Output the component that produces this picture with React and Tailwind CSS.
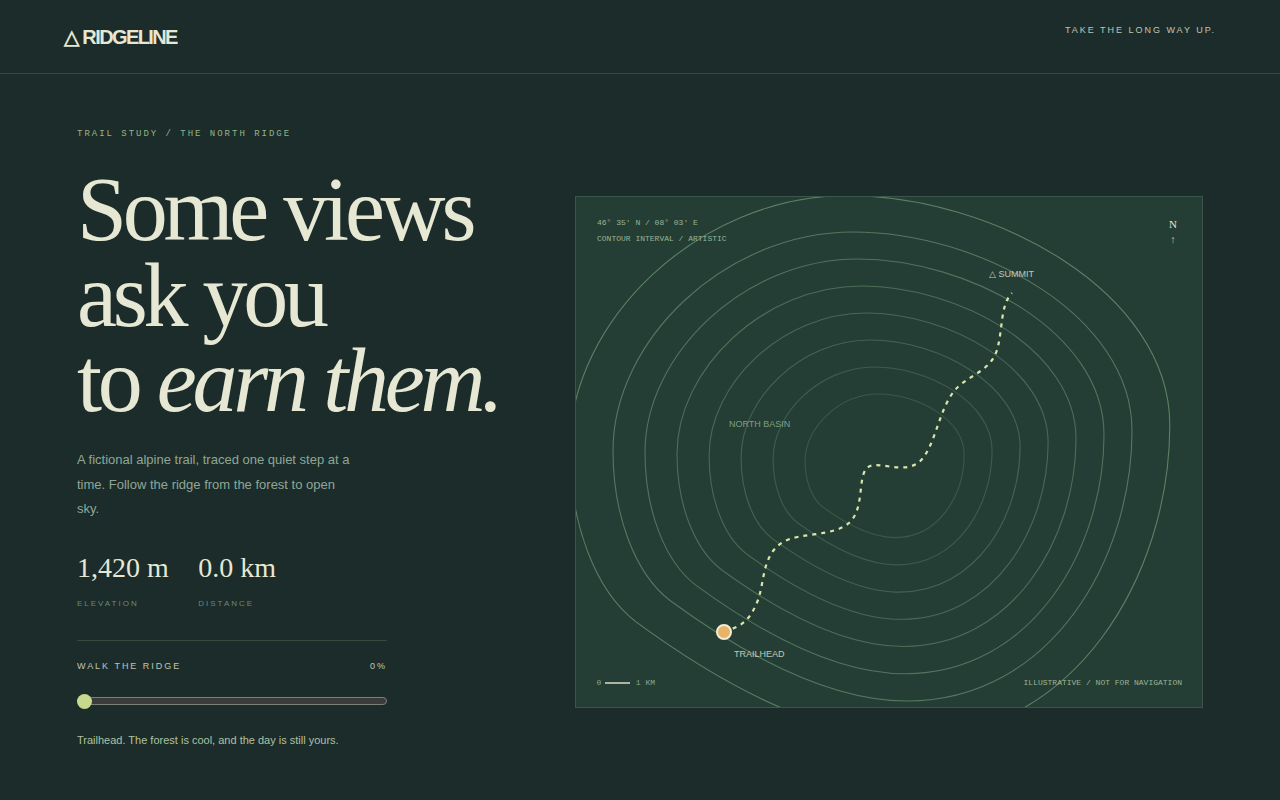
import React from 'react'

const SERIF = 'font-["Liberation_Serif",serif]'

// one contour ring as bezier segments, offsets from the basin centre
const RING = [
  [[90, -233.5], [242, -150], [242, -35]],
  [[242, 95], [160, 235.5], [17, 235.5]],
  [[-60, 235.5], [-145, 190], [-220, 135]],
  [[-255, 108], [-277, 50], [-277, -15]],
  [[-277, -125], [-165, -233.5], [-37, -233.5]],
]

const LEVELS = [
  { s: 2.65, opacity: 0.3 },
  { s: 3.65, opacity: 0.36 },
  { s: 4.65, opacity: 0.44 },
  { s: 5.65, opacity: 0.5 },
  { s: 6.65, opacity: 0.56 },
  { s: 7.65, opacity: 0.62 },
  { s: 8.65, opacity: 0.68 },
  { s: 10, opacity: 0.78 },
]

function ringPath(s) {
  const k = s / 8.65
  const pt = ([x, y]) => `${(890 + x * k).toFixed(1)} ${(465.5 + y * k).toFixed(1)}`
  return `M${pt([-37, -233.5])}` + RING.map(([a, b, c]) => `C${pt(a)} ${pt(b)} ${pt(c)}`).join('') + 'Z'
}

const ROUTE =
  'M724 631C745 627 752 615 758 600C765 580 762 555 783 542C800 532 835 537 850 522C864 508 858 480 866 469C875 458 900 475 918 463C935 450 938 410 955 390C968 375 990 372 997 350C1003 330 1000 305 1012 293'

function TrailMap() {
  return (
    <div className="relative w-[628px] h-[512px] mt-[122px] shrink-0 bg-[#253e35] border border-[#3b5548] overflow-hidden">
      <svg className="absolute inset-0 w-full h-full" viewBox="576 197 626 510" fill="none">
        {LEVELS.map((l) => (
          <path key={l.s} d={ringPath(l.s)} stroke="#6a9476" strokeOpacity={l.opacity} strokeWidth="1.1" />
        ))}
        <path d={ROUTE} stroke="#d8e6ac" strokeWidth="2.2" strokeDasharray="4 5" />
        <circle cx="724" cy="632" r="7" fill="#e8b368" stroke="#f1ecd4" strokeWidth="2" />
      </svg>

      <div className='absolute left-[21px] top-[18px] font-["Liberation_Mono",monospace] text-[8px] leading-[16px] text-[#b5d0b0] opacity-80'>
        <div>46° 35' N / 08° 03' E</div>
        <div>CONTOUR INTERVAL / ARTISTIC</div>
      </div>

      <div className={`absolute right-[25px] top-[20px] flex flex-col items-center text-[11px] leading-[14.5px] text-[#e4e7d2] ${SERIF}`}>
        <span>N</span>
        <span className="opacity-70">↑</span>
      </div>

      <span className='absolute left-[413px] top-[71px] font-["Liberation_Sans",sans-serif] text-[9px] leading-[12px] text-[#e6e8d4] opacity-80'>
        △ SUMMIT
      </span>
      <span className='absolute left-[153px] top-[221px] font-["Liberation_Sans",sans-serif] text-[9px] leading-[12px] text-[#a0c8a5] opacity-70'>
        NORTH BASIN
      </span>
      <span className='absolute left-[158px] top-[451px] font-["Liberation_Sans",sans-serif] text-[9px] leading-[12px] text-[#e6e8d4] opacity-80'>
        TRAILHEAD
      </span>

      <div className='absolute left-[20.5px] bottom-[19px] flex items-center gap-[4px] font-["Liberation_Mono",monospace] text-[8px] leading-[10px] text-[#b5d0b0] opacity-70'>
        <span>0</span>
        <span className="w-[25px] h-[1.5px] mr-[1.5px] bg-[#e6e8d4]" />
        <span>1 KM</span>
      </div>
      <span className='absolute right-[20px] bottom-[19px] font-["Liberation_Mono",monospace] text-[8px] leading-[10px] text-[#b5d0b0] opacity-80'>
        ILLUSTRATIVE / NOT FOR NAVIGATION
      </span>
    </div>
  )
}

function Stat({ value, label }) {
  return (
    <div>
      <div className={`text-[28px] leading-[32px] text-[#e6e8d4] ${SERIF}`}>{value}</div>
      <div className="mt-[15px] text-[8px] leading-[10px] tracking-[0.25em] text-[#8fb098] opacity-70">{label}</div>
    </div>
  )
}

export default function App() {
  return (
    <div className='min-h-[800px] bg-[#1b2c2b] font-["Liberation_Sans",sans-serif]'>
      <header className="h-[74px] px-16 flex justify-between border-b border-[#37493f]">
        <div className="pt-[26px] text-[20px] leading-[23px] font-bold tracking-[-0.08em] text-[#e6e8d4]">
          △ <span className="ml-[1px]">RIDGELINE</span>
        </div>
        <div className="pt-[24px] text-[9px] leading-[12px] tracking-[0.22em] text-[#e6e8d4] opacity-80">
          TAKE THE LONG WAY UP.
        </div>
      </header>

      <main className="flex justify-between px-[77px]">
        <section className="w-[310px] pt-[54px] shrink-0">
          <div className='font-["Liberation_Mono",monospace] text-[9px] leading-[12px] tracking-[0.22em] text-[#b8d49e] opacity-80'>
            TRAIL STUDY / THE NORTH RIDGE
          </div>
          <h1 className={`mt-[27px] w-[460px] text-[90px] leading-[0.95] font-normal tracking-[-0.047em] text-[#e6e8d4] ${SERIF}`}>
            Some views
            <br />
            ask you
            <br />
            to <em>earn them.</em>
          </h1>
          <p className="mt-[24.4px] max-w-[280px] text-[13px] leading-[24.7px] text-[#b6cfb8] opacity-75">
            A fictional alpine trail, traced one quiet step at a time. Follow the ridge from the forest to open sky.
          </p>
          <div className="mt-[30px] flex gap-[29.5px]">
            <Stat value="1,420 m" label="ELEVATION" />
            <Stat value="0.0 km" label="DISTANCE" />
          </div>
          <div className="mt-[31px] h-px bg-[#37493f]" />
          <div className="mt-[20px] flex justify-between text-[9px] leading-[11px] tracking-[0.22em] text-[#e6e8d4] opacity-80">
            <span>WALK THE RIDGE</span>
            <span>0%</span>
          </div>
          <div className="relative mt-[25px] h-[8px] rounded-full bg-[#3b3b3b] border border-[#7a7f7a]">
            <div className="absolute left-[-1px] top-[-4.5px] w-[15px] h-[15px] rounded-full bg-[#c8d98d]" />
          </div>
          <p className="mt-[28px] text-[11px] leading-[14px] text-[#c8dcb6] opacity-85">
            Trailhead. The forest is cool, and the day is still yours.
          </p>
        </section>
        <TrailMap />
      </main>
    </div>
  )
}
